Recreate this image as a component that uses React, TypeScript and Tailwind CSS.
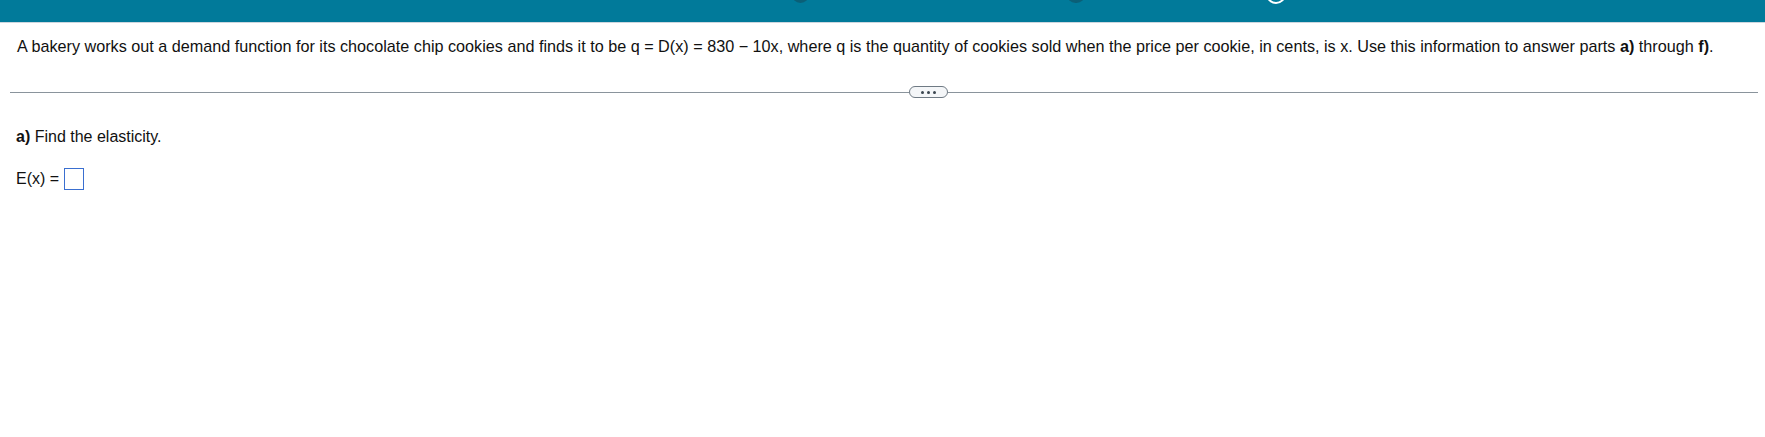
import React from "react";

function TopBar() {
  return (
    <div className="relative h-[23px] bg-[#017a9a] border-b border-[#cdd6de] overflow-hidden">
      {/* bits of header controls cut off at the top edge */}
      <div className="absolute left-[792px] top-[-14px] w-[17px] h-[17px] rounded-full bg-[#0b5f77]" />
      <div className="absolute left-[1067px] top-[-14px] w-[18px] h-[17px] rounded-full bg-[#0b5f77]" />
      <div className="absolute left-[1266px] top-[-16px] w-[20px] h-[20px] rounded-full border-2 border-white" />
    </div>
  );
}

export default function App() {
  return (
    <div
      className="min-h-[437px] bg-white text-[#111]"
      style={{ fontFamily: '"Liberation Sans", Arial, sans-serif' }}
    >
      <TopBar />
      <p className="mt-[14px] px-[17px] text-[16.2px] leading-[18px] whitespace-nowrap">
        A bakery works out a demand function for its chocolate chip cookies and finds it to be q = D(x) = 830 − 10x, where q is the quantity of cookies sold when the price per cookie, in cents, is x. Use this information to answer parts <b>a)</b> through <b>f)</b>.
      </p>
      <div className="mt-[31px] ml-[10px] mr-[7px] flex items-center">
        <div className="h-px w-[899px] bg-[#8a949c]" />
        <button className="w-[39px] h-[12px] rounded-full border border-[#6f7a84] bg-[#f4f6f8] flex items-center justify-center gap-[3px]">
          <span className="w-[3px] h-[3px] rounded-full bg-[#3b4650]" />
          <span className="w-[3px] h-[3px] rounded-full bg-[#3b4650]" />
          <span className="w-[3px] h-[3px] rounded-full bg-[#3b4650]" />
        </button>
        <div className="h-px flex-1 bg-[#8a949c]" />
      </div>
      <div className="px-[16px] mt-[30px] text-[16px] leading-[18px]">
        <p>
          <b>a)</b> Find the elasticity.
        </p>
        <div className="mt-[22px] flex items-center gap-[5px]">
          <span>E(x) =</span>
          <span className="inline-block w-[20px] h-[22px] border border-[#3a6fd0] bg-white" />
        </div>
      </div>
    </div>
  );
}
